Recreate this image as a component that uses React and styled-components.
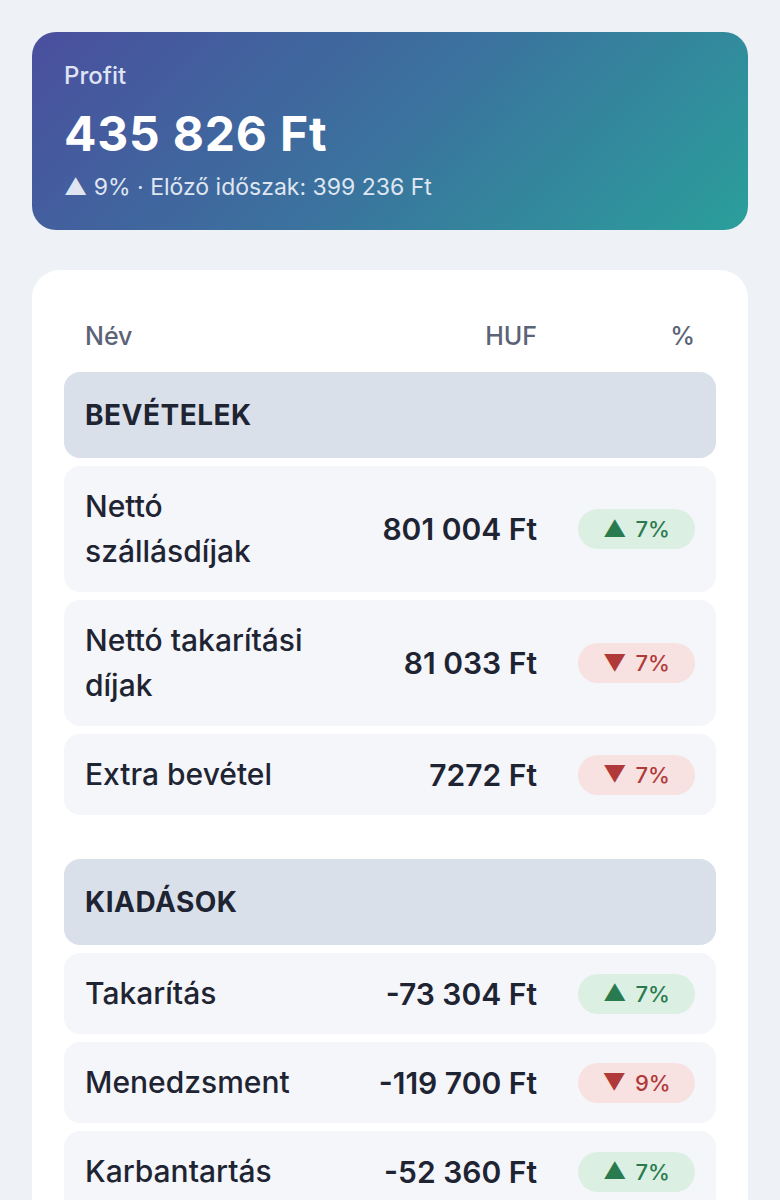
import styled, { createGlobalStyle } from "styled-components";

const GlobalStyle = createGlobalStyle`
  body {
    margin: 0;
    background: #eef1f6;
    font-family: Inter, "Noto Sans", sans-serif;
    color: #1f2433;
  }
`;

const Page = styled.main`
  padding: 32px;
  display: flex;
  flex-direction: column;
  gap: 40px;
`;

const Hero = styled.section`
  border-radius: 24px;
  padding: 29px 32px 29px;
  color: #fff;
  background: linear-gradient(135deg, #4a4f9e 0%, #3b729e 50%, #2a9f9b 100%);
`;

const HeroLabel = styled.div`
  font-size: 24px;
  line-height: 30px;
  font-weight: 500;
  color: #dfe3f3;
`;

const HeroValue = styled.div`
  font-size: 48px;
  line-height: 58px;
  font-weight: 700;
  margin-top: 14px;
  letter-spacing: 0.8px;
`;

const HeroSub = styled.div`
  font-size: 23px;
  line-height: 28px;
  color: #dfe6f2;
  margin-top: 10px;
`;

const Card = styled.section`
  background: #fff;
  border-radius: 28px;
  padding: 52px 32px 32px;
  display: flex;
  flex-direction: column;
`;

const Grid = styled.div`
  display: grid;
  grid-template-columns: 230px minmax(0, 1fr) 117px;
  column-gap: 41px;
  align-items: center;
  padding: 0 21px;
`;

const HeadRow = styled(Grid)`
  font-size: 25px;
  line-height: 28px;
  font-weight: 500;
  color: #5b6376;
  margin-bottom: 22px;
`;

const Right = styled.div`
  text-align: right;
`;

const Section = styled.div`
  display: flex;
  flex-direction: column;
  gap: 8px;
  & + & {
    margin-top: 44px;
  }
`;

const SectionTitle = styled.div`
  background: #d9e0ea;
  border-radius: 16px;
  height: 86px;
  display: flex;
  align-items: center;
  padding: 0 21px;
  font-size: 28px;
  font-weight: 700;
  letter-spacing: 0.5px;
`;

const Row = styled(Grid)`
  background: #f4f6fa;
  border-radius: 16px;
  padding-top: 18px;
  padding-bottom: 18px;
`;

const Name = styled.div`
  font-size: 30px;
  font-weight: 500;
  line-height: 45px;
`;

const Amount = styled.div`
  font-size: 30px;
  font-weight: 600;
  text-align: right;
  white-space: nowrap;
`;

const Badge = styled.div`
  height: 40px;
  border-radius: 20px;
  display: flex;
  align-items: center;
  justify-content: center;
  gap: 9px;
  font-size: 22px;
  font-weight: 500;
  background: ${(p) => (p.$up ? "#dcefe3" : "#f7e1e1")};
  color: ${(p) => (p.$up ? "#2a7a4f" : "#b03a3a")};
`;

const Arrow = styled.span`
  font-size: 23px;
  line-height: 1;
`;

const sections = [
  {
    title: "BEVÉTELEK",
    rows: [
      { name: "Nettó szállásdíjak", amount: "801 004 Ft", up: true, pct: "7%" },
      { name: "Nettó takarítási díjak", amount: "81 033 Ft", up: false, pct: "7%" },
      { name: "Extra bevétel", amount: "7272 Ft", up: false, pct: "7%" },
    ],
  },
  {
    title: "KIADÁSOK",
    rows: [
      { name: "Takarítás", amount: "-73 304 Ft", up: true, pct: "7%" },
      { name: "Menedzsment", amount: "-119 700 Ft", up: false, pct: "9%" },
      { name: "Karbantartás", amount: "-52 360 Ft", up: true, pct: "7%" },
    ],
  },
];

export default function App() {
  return (
    <>
      <GlobalStyle />
      <Page>
        <Hero>
          <HeroLabel>Profit</HeroLabel>
          <HeroValue>435 826 Ft</HeroValue>
          <HeroSub>▲ 9% · Előző időszak: 399 236 Ft</HeroSub>
        </Hero>
        <Card>
          <HeadRow>
            <div>Név</div>
            <Right>HUF</Right>
            <Right>%</Right>
          </HeadRow>
          {sections.map((s) => (
            <Section key={s.title}>
              <SectionTitle>{s.title}</SectionTitle>
              {s.rows.map((r) => (
                <Row key={r.name}>
                  <Name>{r.name}</Name>
                  <Amount>{r.amount}</Amount>
                  <Badge $up={r.up}>
                    <Arrow>{r.up ? "▲" : "▼"}</Arrow>
                    {r.pct}
                  </Badge>
                </Row>
              ))}
            </Section>
          ))}
        </Card>
      </Page>
    </>
  );
}
